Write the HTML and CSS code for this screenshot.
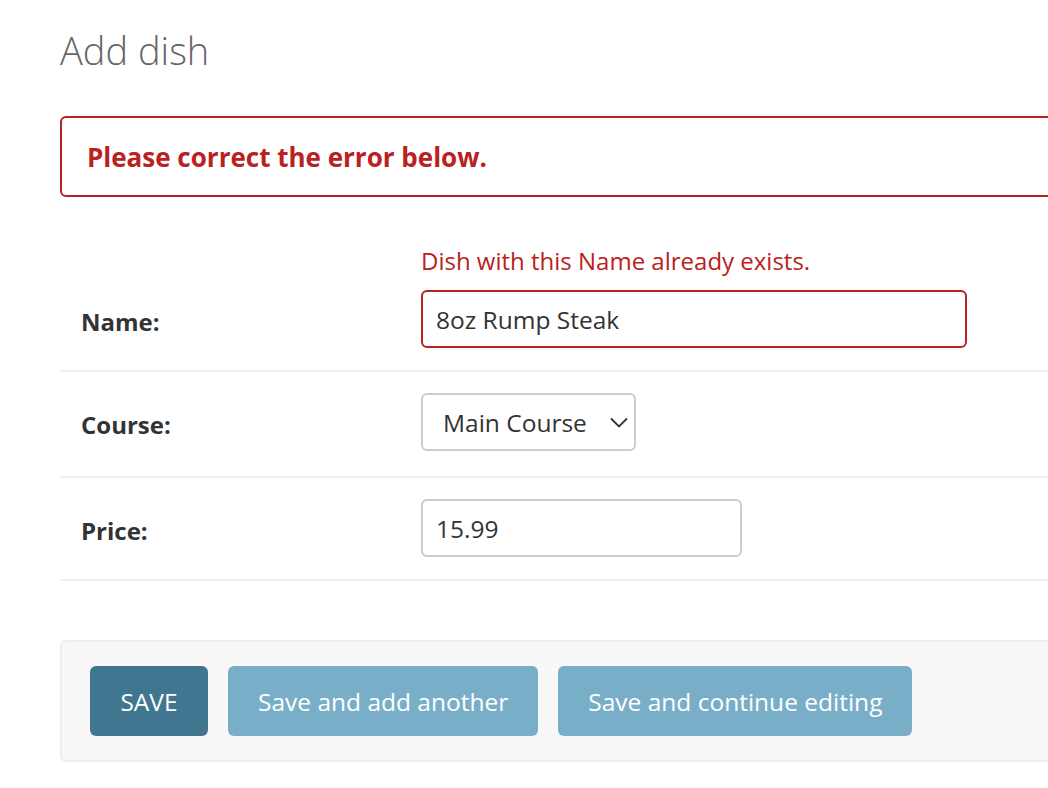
FILE: index.html
```html
<!DOCTYPE html>
<html lang="en">
<head>
<meta charset="utf-8">
<title>Add dish</title>
<link rel="stylesheet" href="styles.css">
</head>
<body>
<div class="page">
  <h1 class="title">Add dish</h1>
  <p class="errornote">Please correct the error below.</p>
  <form class="form">
    <fieldset class="fields">
      <div class="row row-first">
        <ul class="errorlist"><li>Dish with this Name already exists.</li></ul>
        <div class="line">
          <label class="label" for="id_name">Name:</label>
          <input class="input input-name input-error" id="id_name" type="text" value="8oz Rump Steak">
        </div>
      </div>
      <div class="row row-course">
        <div class="line">
          <label class="label" for="id_course">Course:</label>
          <span class="select-wrap">
            <select class="select" id="id_course">
              <option>Main Course</option>
            </select>
            <svg class="chevron" width="18" height="11" viewBox="0 0 18 11"><path d="M1 1.5 L9 9.5 L17 1.5" fill="none" stroke="#333" stroke-width="1.8"/></svg>
          </span>
        </div>
      </div>
      <div class="row">
        <div class="line">
          <label class="label" for="id_price">Price:</label>
          <input class="input input-price" id="id_price" type="text" value="15.99">
        </div>
      </div>
    </fieldset>
    <div class="submit-row">
      <button type="button" class="btn btn-default">SAVE</button>
      <button type="button" class="btn">Save and add another</button>
      <button type="button" class="btn">Save and continue editing</button>
    </div>
  </form>
</div>
</body>
</html>
```
FILE: styles.css
```css
html, body {
  margin: 0;
  padding: 0;
  background: #fff;
  overflow: hidden;
}
body {
  font-family: "Open Sans", "Noto Sans", sans-serif;
  color: #333;
}
.page {
  width: 1120px;
  padding-left: 60px;
}
.title {
  margin: 26px 0 0 0;
  font-size: 38px;
  line-height: 48px;
  font-weight: 300;
  color: #666;
}
.errornote {
  margin: 42px 0 0 0;
  height: 77px;
  box-sizing: content-box;
  border: 2px solid #ba2121;
  border-radius: 6px;
  padding: 0 0 0 25px;
  display: flex;
  align-items: center;
  font-size: 26px;
  font-weight: 700;
  color: #ba2121;
}
.form {
  margin: 0;
}
.fields {
  margin: 32px 0 0 0;
  padding: 0;
  border: none;
}
.row {
  padding: 21px 20px 22px 21px;
  border-bottom: 2px solid #eee;
}
.row-first {
  padding-top: 19px;
  padding-bottom: 22px;
}
.row-course {
  padding-bottom: 25px;
}
.errorlist {
  list-style: none;
  margin: 0 0 16px 340px;
  padding: 0;
  font-size: 24px;
  line-height: 26px;
  color: #ba2121;
}
.line {
  display: flex;
  align-items: center;
}
.label {
  flex: none;
  width: 340px;
  padding-top: 5px;
  font-size: 24px;
  font-weight: 700;
  color: #333;
}
.input, .select {
  box-sizing: border-box;
  height: 58px;
  border: 2px solid #ccc;
  border-radius: 6px;
  background: #fff;
  font-family: inherit;
  font-size: 24.5px;
  color: #333;
  padding: 0 13px;
  outline: none;
}
.input-name { width: 546px; }
.input-price { width: 321px; }
.input-error { border-color: #ba2121; }
.select-wrap {
  position: relative;
  display: inline-block;
}
.select {
  appearance: none;
  -webkit-appearance: none;
  width: 215px;
  padding: 0 0 0 20px;
}
.chevron {
  position: absolute;
  left: 189px;
  top: 24px;
  pointer-events: none;
}
.submit-row {
  margin-top: 59px;
  background: #f8f8f8;
  border: 2px solid #eee;
  border-radius: 6px;
  padding: 24px 28px;
  display: flex;
  gap: 20px;
}
.btn {
  height: 70px;
  border: none;
  border-radius: 6px;
  background: #79aec8;
  color: #fff;
  font-family: inherit;
  font-size: 24.5px;
  padding: 0 30px;
  cursor: pointer;
}
.btn-default {
  background: #417690;
  width: 118px;
  padding: 0;
}
```
